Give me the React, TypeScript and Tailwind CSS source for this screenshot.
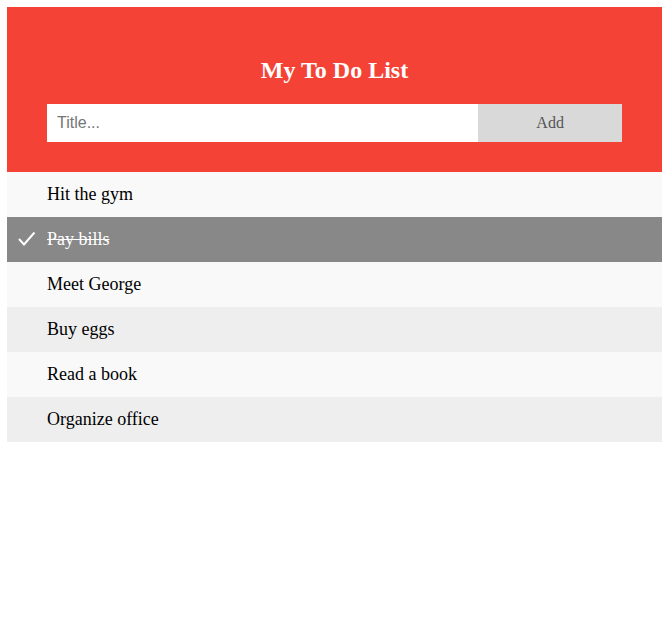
const todos = [
  { text: 'Hit the gym', done: false },
  { text: 'Pay bills', done: true },
  { text: 'Meet George', done: false },
  { text: 'Buy eggs', done: false },
  { text: 'Read a book', done: false },
  { text: 'Organize office', done: false },
];

function CheckMark() {
  return (
    <svg className="absolute left-[11px] top-[14px]" width="18" height="15" viewBox="0 0 18 15" fill="none">
      <polyline points="1,8 6,13.5 16.5,1.5" stroke="#fff" strokeWidth="2" />
    </svg>
  );
}

export default function App() {
  return (
    <div className="min-h-[631px] bg-white font-['Liberation_Serif',serif] pl-[7px] pt-[7px]">
      <div className="w-[655px]">
        {/* Header */}
        <div className="bg-[#f44336] px-10 pt-[50px] pb-[30px] text-center">
          <h2 className="text-white text-[24px] font-bold leading-[27px] mb-[20px]">My To Do List</h2>
          <div className="flex h-[38px]">
            <input
              type="text"
              placeholder="Title..."
              className="w-3/4 h-full bg-white px-[10px] text-[16px] font-['Liberation_Sans',sans-serif] placeholder:text-[#757575] outline-none"
            />
            <button className="w-1/4 h-full bg-[#d9d9d9] text-[#555] text-[16px]">Add</button>
          </div>
        </div>

        {/* List */}
        <ul>
          {todos.map((t, i) => (
            <li
              key={t.text}
              className={
                'relative h-[45px] flex items-center pl-10 text-[18px] leading-[21px] ' +
                (t.done ? 'bg-[#888] text-white line-through' : i % 2 === 0 ? 'bg-[#f9f9f9] text-black' : 'bg-[#eee] text-black')
              }
            >
              {t.done && <CheckMark />}
              {t.text}
            </li>
          ))}
        </ul>
      </div>
    </div>
  );
}
